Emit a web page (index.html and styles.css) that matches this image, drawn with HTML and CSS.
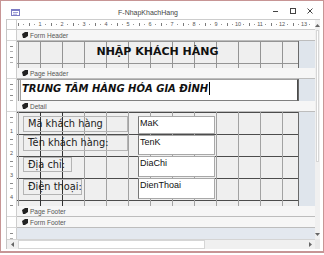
FILE: index.html
```html
<!DOCTYPE html>
<html>
<head>
<meta charset="utf-8">
<link rel="stylesheet" href="styles.css">
</head>
<body>
<div class="window">
  <div class="titlebar">
    <svg class="appicon" width="9" height="7" viewBox="0 0 9 7"><rect x="0.5" y="0.5" width="8" height="6" fill="#fff" stroke="#7b7bc4"/><rect x="0" y="0" width="9" height="2" fill="#7b7bc4"/><path d="M2 3.5h5M2 5.2h4" stroke="#9e9ed8"/></svg>
    <div class="title">F-NhapKhachHang</div>
    <div class="controls">
      <span class="ctl"><svg width="6" height="6" viewBox="0 0 6 6"><path d="M0 3.5H5" stroke="#444"/></svg></span>
      <span class="ctl"><svg width="6" height="6" viewBox="0 0 6 6"><rect x="0.5" y="0.5" width="5" height="5" fill="none" stroke="#444"/></svg></span>
      <span class="ctl"><svg width="6" height="6" viewBox="0 0 6 6"><path d="M0.5 0.5L5.5 5.5M5.5 0.5L0.5 5.5" stroke="#444"/></svg></span>
    </div>
  </div>
  <div class="client">
    <div class="main">
      <div class="hruler">
        <div class="corner"></div>
        <div class="ticks">
          <span class="gap"></span>
          <span class="n"><b>1</b></span><span class="n"><b>2</b></span><span class="n"><b>3</b></span><span class="n"><b>4</b></span><span class="n"><b>5</b></span><span class="n"><b>6</b></span><span class="n"><b>7</b></span><span class="n"><b>8</b></span><span class="n"><b>9</b></span><span class="n"><b>10</b></span><span class="n"><b>11</b></span><span class="n"><b>12</b></span><span class="n"><b>13</b></span>
        </div>
      </div>

      <div class="bar-row">
        <div class="vr-b"></div>
        <div class="bar"><svg width="6" height="6" viewBox="0 0 6 6"><path d="M0 2L3 0H6V4L3 6H1Z" fill="#222"/></svg><span>Form Header</span></div>
      </div>
      <div class="sec-row fh-row">
        <div class="vr"></div>
        <div class="sec fh"><div class="heading">NHẬP KHÁCH HÀNG</div></div>
        <div class="beyond"></div>
      </div>

      <div class="bar-row">
        <div class="vr-b"></div>
        <div class="bar"><svg width="6" height="6" viewBox="0 0 6 6"><path d="M0 2L3 0H6V4L3 6H1Z" fill="#222"/></svg><span>Page Header</span></div>
      </div>
      <div class="sec-row ph-row">
        <div class="vr"></div>
        <div class="sec ph"><div class="ph-box">TRUNG TÂM HÀNG HÓA GIA ĐÌNH<i class="caret"></i></div></div>
        <div class="beyond"></div>
      </div>

      <div class="bar-row">
        <div class="vr-b"></div>
        <div class="bar"><svg width="6" height="6" viewBox="0 0 6 6"><path d="M0 2L3 0H6V4L3 6H1Z" fill="#222"/></svg><span>Detail</span></div>
      </div>
      <div class="sec-row d-row">
        <div class="vr vr-d">
          <span class="vn"><b>1</b></span><span class="vn"><b>2</b></span><span class="vn"><b>3</b></span><span class="vn"><b>4</b></span>
        </div>
        <div class="sec detail">
          <div class="lbl l1">Mã khách hàng</div>
          <div class="tb t1">MaK</div>
          <div class="lbl l2">Tên khách hàng:</div>
          <div class="tb t2">TenK</div>
          <div class="lbl l3">Địa chỉ:</div>
          <div class="tb t3">DiaChi</div>
          <div class="lbl l4">Điện thoại:</div>
          <div class="tb t4">DienThoai</div>
        </div>
        <div class="beyond"></div>
      </div>

      <div class="bar-row">
        <div class="vr-b"></div>
        <div class="bar"><svg width="6" height="6" viewBox="0 0 6 6"><path d="M0 2L3 0H6V4L3 6H1Z" fill="#222"/></svg><span>Page Footer</span></div>
      </div>
      <div class="bar-row">
        <div class="vr-b"></div>
        <div class="bar"><svg width="6" height="6" viewBox="0 0 6 6"><path d="M0 2L3 0H6V4L3 6H1Z" fill="#222"/></svg><span>Form Footer</span></div>
      </div>
      <div class="empty-row">
        <div class="vr"></div>
        <div class="void"></div>
      </div>

      <div class="hscroll">
        <div class="harrow"><svg width="3" height="5" viewBox="0 0 3 5"><path d="M3 0V5L0 2.5Z" fill="#666"/></svg></div>
        <div class="hthumb"></div>
        <div class="htrack"></div>
        <div class="harrow"><svg width="3" height="5" viewBox="0 0 3 5"><path d="M0 0V5L3 2.5Z" fill="#666"/></svg></div>
      </div>
    </div>
    <div class="vscroll">
      <div class="varrow up"><svg width="5" height="3" viewBox="0 0 5 3"><path d="M0 3H5L2.5 0Z" fill="#666"/></svg></div>
      <div class="vthumb"></div>
      <div class="vtrack"></div>
      <div class="varrow down"><svg width="5" height="3" viewBox="0 0 5 3"><path d="M0 0H5L2.5 3Z" fill="#666"/></svg></div>
      <div class="vcorner"></div>
    </div>
  </div>
</div>
</body>
</html>
```

FILE: styles.css
```css
* { box-sizing: border-box; margin: 0; padding: 0; }
html, body { background: #fff; }
body {
  width: 324px;
  height: 255px;
  overflow: hidden;
  font-family: "DejaVu Sans", sans-serif;
}
.window {
  width: 324px;
  border: 1px solid #c79595;
  border-bottom-width: 2px;
  padding-bottom: 2px;
  background: #fff;
}

/* title bar */
.titlebar {
  height: 18px;
  display: flex;
  align-items: center;
  padding-top: 4px;
}
.appicon { margin-left: 10px; flex-shrink: 0; }
.title {
  flex: 1;
  text-align: center;
  padding-left: 9px;
  font: 7px "Liberation Sans", sans-serif;
  color: #444;
}
.controls { display: flex; margin-right: 5px; margin-top: -3px; }
.ctl { width: 17px; height: 8px; display: flex; align-items: center; justify-content: center; }

/* client */
.client { display: flex; padding: 0 4px 0 5px; }
.main {
  flex: 1;
  display: flex;
  flex-direction: column;
  border-left: 1px solid #c6c6c6;
}

/* horizontal ruler */
.hruler {
  height: 11px;
  display: flex;
  border-top: 1px solid #cdcdcd;
  border-bottom: 1px solid #cdcdcd;
}
.corner { width: 10px; border-right: 1px solid #cdcdcd; }
.ticks {
  flex: 1;
  display: flex;
  align-items: center;
  overflow: hidden;
  background-image:
    linear-gradient(90deg, #7a7a7a 1px, transparent 1px),
    linear-gradient(90deg, #9a9a9a 1px, transparent 1px);
  background-size: 11px 3px, 11px 1px;
  background-position: 1px 50%, 6px 50%;
  background-repeat: repeat-x, repeat-x;
}
.gap { width: 12px; flex-shrink: 0; }
.n {
  width: 22px;
  flex-shrink: 0;
  text-align: center;
  font: 5.5px/7px "Liberation Sans", sans-serif;
  color: #555;
}
.n b { font-weight: normal; background: #fff; padding: 0 1px; }

/* section bars */
.bar-row { display: flex; height: 11px; }
.vr-b {
  width: 10px;
  border-right: 1px solid #cdcdcd;
  border-bottom: 1px solid #d6d6d6;
  background: #fff;
}
.bar {
  flex: 1;
  display: flex;
  align-items: center;
  gap: 2px;
  padding-left: 5px;
  background: #f6f6f6;
  border-bottom: 1px solid #bdbdbd;
  font: 6.5px "Liberation Sans", sans-serif;
  color: #555;
}

/* section rows */
.sec-row { display: flex; }
.fh-row { height: 27px; }
.ph-row { height: 22px; }
.d-row { height: 94px; }
.vr {
  width: 10px;
  flex-shrink: 0;
  border-right: 1px solid #cdcdcd;
  background-color: #fff;
  background-image: repeating-linear-gradient(#8a8a8a 0 1px, transparent 1px 5px, #b0b0b0 5px 6px, transparent 6px 11px);
  background-size: 3px 100%;
  background-position: 3px 5px;
  background-repeat: no-repeat;
}
.vr-d { display: flex; flex-direction: column; }
.vn {
  height: 22px;
  flex-shrink: 0;
  display: flex;
  align-items: flex-end;
  justify-content: center;
  font: 5.5px/6px "Liberation Sans", sans-serif;
  color: #555;
}
.vn b { font-weight: normal; background: #fff; }

.sec {
  width: 282px;
  flex-shrink: 0;
  border-right: 1px solid #6a6a6a;
  background-color: #efefef;
  background-image:
    linear-gradient(90deg, #949494 1px, transparent 1px),
    linear-gradient(#949494 1px, transparent 1px);
  background-size: 22px 22px;
  background-position: 1px 0;
}
.beyond { flex: 1; background: #dfe5ec; }

/* form header */
.heading {
  text-align: center;
  padding-top: 4px;
  font: bold 11px/14px "DejaVu Sans", sans-serif;
  color: #111;
}

/* page header */
.ph { display: flex; padding-left: 3px; }
.ph-box {
  flex: 1;
  background: #fff;
  border: 1px solid #a0a0a0;
  border-right-color: #4a4a4a;
  border-bottom-color: #808080;
  padding: 1px 0 0 1px;
  font: italic bold 10px/16px "DejaVu Sans", sans-serif;
  color: #111;
  white-space: nowrap;
}
.caret {
  display: inline-block;
  width: 1px;
  height: 13px;
  background: #000;
  vertical-align: -3px;
  margin-left: 1px;
}

/* detail */
.detail {
  display: grid;
  grid-template-columns: 6px 105px 10px 77px 1fr;
  grid-template-rows: 4px 19px 21px 22px 22px 1fr;
  background-image:
    linear-gradient(90deg, transparent 23px, #333 23px 24px, transparent 24px 45px, #333 45px 46px, transparent 46px),
    linear-gradient(90deg, #a2a2a2 1px, transparent 1px),
    linear-gradient(#4c4c4c 1px, transparent 1px);
  background-size: 100% 100%, 22px 22px, 22px 22px;
  background-position: 0 0, 1px 0, 0 0;
  background-repeat: no-repeat, repeat, repeat;
}
.lbl {
  grid-column: 2;
  align-self: start;
  border: 1px solid #b4b4b4;
  padding-left: 4px;
  font: 9.8px/14px "DejaVu Sans", sans-serif;
  color: #1a1a1a;
  white-space: nowrap;
}
.l1 { grid-row: 2; height: 16px; }
.l2 { grid-row: 3; height: 16px; }
.l3 { grid-row: 4; height: 15px; width: 49px; margin-top: 1px; }
.l4 { grid-row: 5; height: 16px; width: 59px; margin-top: 1px; }
.tb {
  grid-column: 4;
  margin-bottom: 1px;
  background: #fff;
  border: 1px solid #a8a8a8;
  border-left-color: #777;
  padding: 1px 0 0 1px;
  font: 9px/11px "Liberation Sans", sans-serif;
  color: #111;
}
.t1 { grid-row: 2; }
.t2 { grid-row: 3; }
.t3 { grid-row: 4; }
.t4 { grid-row: 5; }

/* empty area */
.empty-row { display: flex; height: 11px; }
.void { flex: 1; background: #e3e8ef; }

/* horizontal scrollbar */
.hscroll {
  display: flex;
  height: 10px;
  background: #f0f0f0;
  border-top: 1px solid #d4d4d4;
}
.harrow { width: 10px; display: flex; align-items: center; justify-content: center; }
.hthumb { width: 187px; margin-left: 1px; background: #fff; border: 1px solid #d6d6d6; }
.htrack { flex: 1; }

/* vertical scrollbar */
.vscroll {
  width: 10px;
  display: flex;
  flex-direction: column;
  background: #f0f0f0;
}
.varrow { display: flex; align-items: center; justify-content: center; }
.varrow.up { height: 11px; border-top: 1px solid #cdcdcd; }
.varrow.down { height: 10px; }
.vthumb { height: 132px; margin: 0 1px; background: #fff; border: 1px solid #d6d6d6; }
.vtrack { flex: 1; }
.vcorner { height: 10px; background: #e8e8e8; }
```
